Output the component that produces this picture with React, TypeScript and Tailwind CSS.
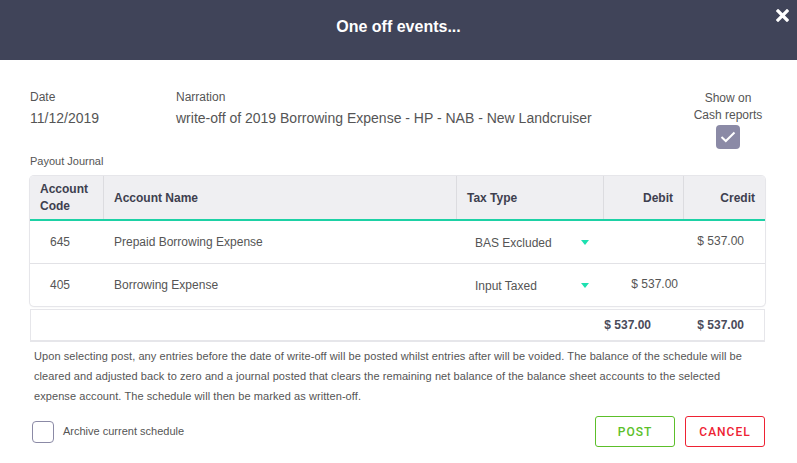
import React from "react";

function Caret() {
  return (
    <svg width="10" height="6" viewBox="0 0 10 6" className="shrink-0">
      <path d="M1 0 L9 0 L5 5 Z" fill="#1de0b0" />
    </svg>
  );
}

export default function App() {
  const font = { fontFamily: '"Liberation Sans", Arial, sans-serif' };
  return (
    <div className="w-[797px] h-[463px] bg-white overflow-hidden text-[#555]" style={font}>
      <div className="relative h-[60px] bg-[#404459] flex items-center justify-center pb-[7px]">
        <span className="text-white font-bold text-[16px]">One off events...</span>
        <svg className="absolute right-[8px] top-[9px]" width="13" height="13" viewBox="0 0 13 13">
          <path d="M2 2 L11 11 M11 2 L2 11" stroke="#fff" strokeWidth="3.2" strokeLinecap="square" />
        </svg>
      </div>

      <div className="px-[30px] pt-[30px]">
        <div className="flex">
          <div className="w-[146px]">
            <div className="text-[12px] text-[#555] leading-[15px]">Date</div>
            <div className="text-[14px] text-[#555] leading-[18px] mt-[4px]">11/12/2019</div>
          </div>
          <div className="flex-1">
            <div className="text-[12px] text-[#555] leading-[15px]">Narration</div>
            <div className="text-[14px] text-[#555] leading-[18px] mt-[4px]">write-off of 2019 Borrowing Expense - HP - NAB - New Landcruiser</div>
          </div>
          <div className="w-[70px] mr-[4px] flex flex-col items-center">
            <div className="text-[12px] text-[#555] leading-[17px] text-center whitespace-nowrap">Show on<br />Cash reports</div>
            <div className="w-[24px] h-[24px] rounded-[4px] bg-[#8b8aa6] flex items-center justify-center mt-[1px]">
              <svg width="16" height="12" viewBox="0 0 16 12">
                <path d="M1.5 6 L5.8 10 L14.5 1.5" stroke="#fff" strokeWidth="2" fill="none" />
              </svg>
            </div>
          </div>
        </div>

        <div className="text-[11px] text-[#555] mt-[5px] leading-[14px]">Payout Journal</div>

        <div className="mt-[8px] w-[735px] rounded-[4px] shadow-[0_0_0_1px_#e6e6ea,0_1px_2px_rgba(0,0,0,0.08)] overflow-hidden">
          <div className="flex h-[45px] bg-[#efeff2] border-b-2 border-[#1dd1a5] text-[12px] font-bold text-[#3e3f4f]">
            <div className="w-[74px] border-r border-[#dcdce0] px-[10px] flex items-center leading-[17px]">Account<br />Code</div>
            <div className="w-[353px] border-r border-[#dcdce0] px-[10px] flex items-center">Account Name</div>
            <div className="w-[147px] border-r border-[#dcdce0] px-[10px] flex items-center">Tax Type</div>
            <div className="w-[80px] border-r border-[#dcdce0] px-[10px] flex items-center justify-end">Debit</div>
            <div className="flex-1 px-[10px] flex items-center justify-end">Credit</div>
          </div>
          <div className="flex h-[43px] border-b border-[#e2e2e6] text-[12px] text-[#555] items-center">
            <div className="w-[74px] pl-[20px]">645</div>
            <div className="w-[353px] px-[10px]">Prepaid Borrowing Expense</div>
            <div className="w-[147px] pl-[18px] pr-[14px] flex items-center justify-between pt-[1px]">
              <span>BAS Excluded</span>
              <Caret />
            </div>
            <div className="w-[80px]"></div>
            <div className="flex-1 pr-[21px] text-right whitespace-nowrap pb-[3px]">$ 537.00</div>
          </div>
          <div className="flex h-[42px] text-[12px] text-[#555] items-center">
            <div className="w-[74px] pl-[20px]">405</div>
            <div className="w-[353px] px-[10px]">Borrowing Expense</div>
            <div className="w-[147px] pl-[18px] pr-[14px] flex items-center justify-between pt-[1px]">
              <span>Input Taxed</span>
              <Caret />
            </div>
            <div className="w-[80px] pr-[6px] text-right whitespace-nowrap pb-[2px]">$ 537.00</div>
            <div className="flex-1"></div>
          </div>
        </div>

        <div className="mt-[3px] w-[735px] h-[33px] border border-[#e6e6ea] border-b-2 flex items-center text-[12px] font-bold text-[#4a4b5a]">
          <div className="w-[620px] text-right whitespace-nowrap">$ 537.00</div>
          <div className="flex-1 text-right pr-[20px] whitespace-nowrap">$ 537.00</div>
        </div>

        <p className="mt-[4px] pl-[4px] w-[730px] text-[11px] leading-[20px] text-[#555] tracking-[0.08px]">
          Upon selecting post, any entries before the date of write-off will be posted whilst entries after will be voided. The balance of the schedule will be cleared and adjusted back to zero and a journal posted that clears the remaining net balance of the balance sheet accounts to the selected expense account. The schedule will then be marked as written-off.
        </p>

        <div className="flex items-center mt-[10px] mr-[2px]">
          <div className="ml-[2px] w-[22px] h-[22px] rounded-[4px] border border-[#8b8aa6] bg-white"></div>
          <span className="ml-[9px] text-[11px] text-[#555]">Archive current schedule</span>
          <div className="flex-1"></div>
          <button className="w-[80px] h-[31px] rounded-[3px] border border-[#5cbf2a] text-[#5cbf2a] text-[12px] font-medium tracking-[1px] bg-white" style={{ fontFamily: 'Roboto, "Liberation Sans", sans-serif' }}>POST</button>
          <button className="ml-[10px] w-[80px] h-[31px] rounded-[3px] border border-[#ee2233] text-[#ee2233] text-[12px] font-medium tracking-[1px] bg-white" style={{ fontFamily: 'Roboto, "Liberation Sans", sans-serif' }}>CANCEL</button>
        </div>
      </div>
    </div>
  );
}
